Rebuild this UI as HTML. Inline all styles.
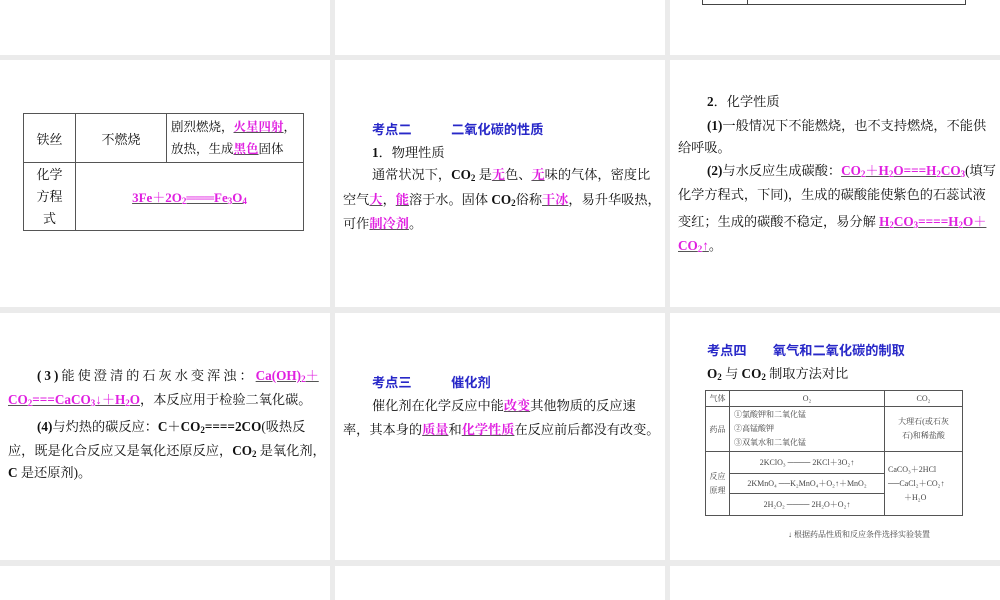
<!DOCTYPE html>
<html><head><meta charset="utf-8"><style>
*{margin:0;padding:0;box-sizing:border-box}
body{width:1000px;height:600px;background:#ebebeb;position:relative;overflow:hidden;font-family:"Liberation Serif","Noto Serif CJK SC",serif;font-size:13.2px;color:#111}
.s{position:absolute;background:#fff;overflow:hidden}
.t{position:absolute;white-space:nowrap;line-height:16px}
.m{color:#e020e0;font-weight:bold;text-decoration:underline;text-decoration-color:#555}
.b{color:#2828c8;font-weight:bold;font-family:"Liberation Sans","Noto Sans CJK SC",sans-serif}
b{font-weight:bold}
sub{font-size:9px;vertical-align:-2px;line-height:0}
table{border-collapse:collapse;position:absolute;table-layout:fixed}
td{border:1px solid #555;text-align:center;white-space:nowrap}
</style></head><body>
<div class="s" style="left:0;top:0;width:330px;height:55px"></div>
<div class="s" style="left:335px;top:0;width:330px;height:55px"></div>
<div class="s" style="left:670px;top:0;width:330px;height:55px">
<div style="position:absolute;left:32px;top:-2px;width:264px;height:7px;border:1px solid #444;border-top:none"></div>
<div style="position:absolute;left:77px;top:-2px;width:1px;height:7px;background:#444"></div>
</div>
<div class="s" style="left:0;top:60px;width:330px;height:247px">
<table style="left:23px;top:53px;width:280px;font-size:13px">
<tr style="height:49px"><td style="width:52px">铁丝</td><td style="width:91px">不燃烧</td><td style="width:137px;text-align:left;padding-left:4px;line-height:22px;font-size:12.5px">剧烈燃烧，<span class="m">火星四射</span>，<br>放热，生成<span class="m">黑色</span>固体</td></tr>
<tr style="height:68px"><td style="line-height:22px">化学<br>方程<br>式</td><td colspan="2"><span class="m">3Fe＋2O<sub>2</sub>═══Fe<sub>3</sub>O<sub>4</sub></span></td></tr>
</table>
</div>
<div class="s" style="left:335px;top:60px;width:330px;height:247px">
<div class="t b" style="left:37px;top:62px">考点二　　　二氧化碳的性质</div>
<div class="t" style="left:37px;top:85px"><b>1</b>．物理性质</div>
<div class="t" style="left:37px;top:107px">通常状况下，<b>CO<sub>2</sub></b> 是<span class="m">无</span>色、<span class="m">无</span>味的气体，密度比</div>
<div class="t" style="left:8px;top:132px">空气<span class="m">大</span>，<span class="m">能</span>溶于水。固体 <b>CO<sub>2</sub></b>俗称<span class="m">干冰</span>，易升华吸热，</div>
<div class="t" style="left:8px;top:156px">可作<span class="m">制冷剂</span>。</div>
</div>
<div class="s" style="left:670px;top:60px;width:330px;height:247px">
<div class="t" style="left:37px;top:34px"><b>2</b>．化学性质</div>
<div class="t" style="left:37px;top:58px"><b>(1)</b>一般情况下不能燃烧，也不支持燃烧，不能供</div>
<div class="t" style="left:8px;top:80px">给呼吸。</div>
<div class="t" style="left:37px;top:103px"><b>(2)</b>与水反应生成碳酸：<span class="m">CO<sub>2</sub>＋H<sub>2</sub>O===H<sub>2</sub>CO<sub>3</sub></span>(填写</div>
<div class="t" style="left:8px;top:127px">化学方程式，下同)，生成的碳酸能使紫色的石蕊试液</div>
<div class="t" style="left:8px;top:154px">变红；生成的碳酸不稳定，易分解 <span class="m">H<sub>2</sub>CO<sub>3</sub>====H<sub>2</sub>O＋</span></div>
<div class="t" style="left:8px;top:178px"><span class="m">CO<sub>2</sub>↑</span>。</div>
</div>
<div class="s" style="left:0;top:313px;width:330px;height:247px">
<div class="t" style="left:37px;top:55px;letter-spacing:3px"><b>(3)</b>能使澄清的石灰水变浑浊：<span class="m" style="letter-spacing:0">Ca(OH)<sub>2</sub>＋</span></div>
<div class="t" style="left:8px;top:79px"><span class="m">CO<sub>2</sub>===CaCO<sub>3</sub>↓＋H<sub>2</sub>O</span>，本反应用于检验二氧化碳。</div>
<div class="t" style="left:37px;top:106px"><b>(4)</b>与灼热的碳反应：<b>C</b>＋<b>CO<sub>2</sub>====2CO</b>(吸热反</div>
<div class="t" style="left:8px;top:130px">应，既是化合反应又是氧化还原反应，<b>CO<sub>2</sub></b> 是氧化剂，</div>
<div class="t" style="left:8px;top:152px"><b>C</b> 是还原剂)。</div>
</div>
<div class="s" style="left:335px;top:313px;width:330px;height:247px">
<div class="t b" style="left:37px;top:62px">考点三　　　催化剂</div>
<div class="t" style="left:37px;top:85px">催化剂在化学反应中能<span class="m">改变</span>其他物质的反应速</div>
<div class="t" style="left:8px;top:109px">率，其本身的<span class="m">质量</span>和<span class="m">化学性质</span>在反应前后都没有改变。</div>
</div>
<div class="s" style="left:670px;top:313px;width:330px;height:247px">
<div class="t b" style="left:37px;top:30px">考点四　　氧气和二氧化碳的制取</div>
<div class="t" style="left:37px;top:53px"><b>O<sub>2</sub></b> 与 <b>CO<sub>2</sub></b> 制取方法对比</div>
<table style="left:35px;top:77px;width:258px;font-size:8px;color:#444">
<tr style="height:16px"><td style="width:24px">气体</td><td style="width:155px">O₂</td><td>CO₂</td></tr>
<tr style="height:45px"><td>药品</td><td style="text-align:left;padding-left:4px;line-height:14px">①氯酸钾和二氧化锰<br>②高锰酸钾<br>③双氧水和二氧化锰</td><td style="line-height:14px">大理石(或石灰<br>石)和稀盐酸</td></tr>
<tr style="height:22px"><td rowspan="3" style="line-height:14px">反应<br>原理</td><td>2KClO₃ ──── 2KCl＋3O₂↑</td><td rowspan="3" style="text-align:left;line-height:14px;padding-left:3px">CaCO₃＋2HCl<br>──CaCl₂＋CO₂↑<br>　　＋H₂O</td></tr>
<tr style="height:20px"><td>2KMnO₄ ──K₂MnO₄＋O₂↑＋MnO₂</td></tr>
<tr style="height:22px"><td>2H₂O₂ ──── 2H₂O＋O₂↑</td></tr>
</table>
<div class="t" style="left:118px;top:214px;font-size:8px;color:#444">↓ 根据药品性质和反应条件选择实验装置</div>
</div>
<div class="s" style="left:0;top:566px;width:330px;height:34px"></div>
<div class="s" style="left:335px;top:566px;width:330px;height:34px"></div>
<div class="s" style="left:670px;top:566px;width:330px;height:34px"></div>
</body></html>
